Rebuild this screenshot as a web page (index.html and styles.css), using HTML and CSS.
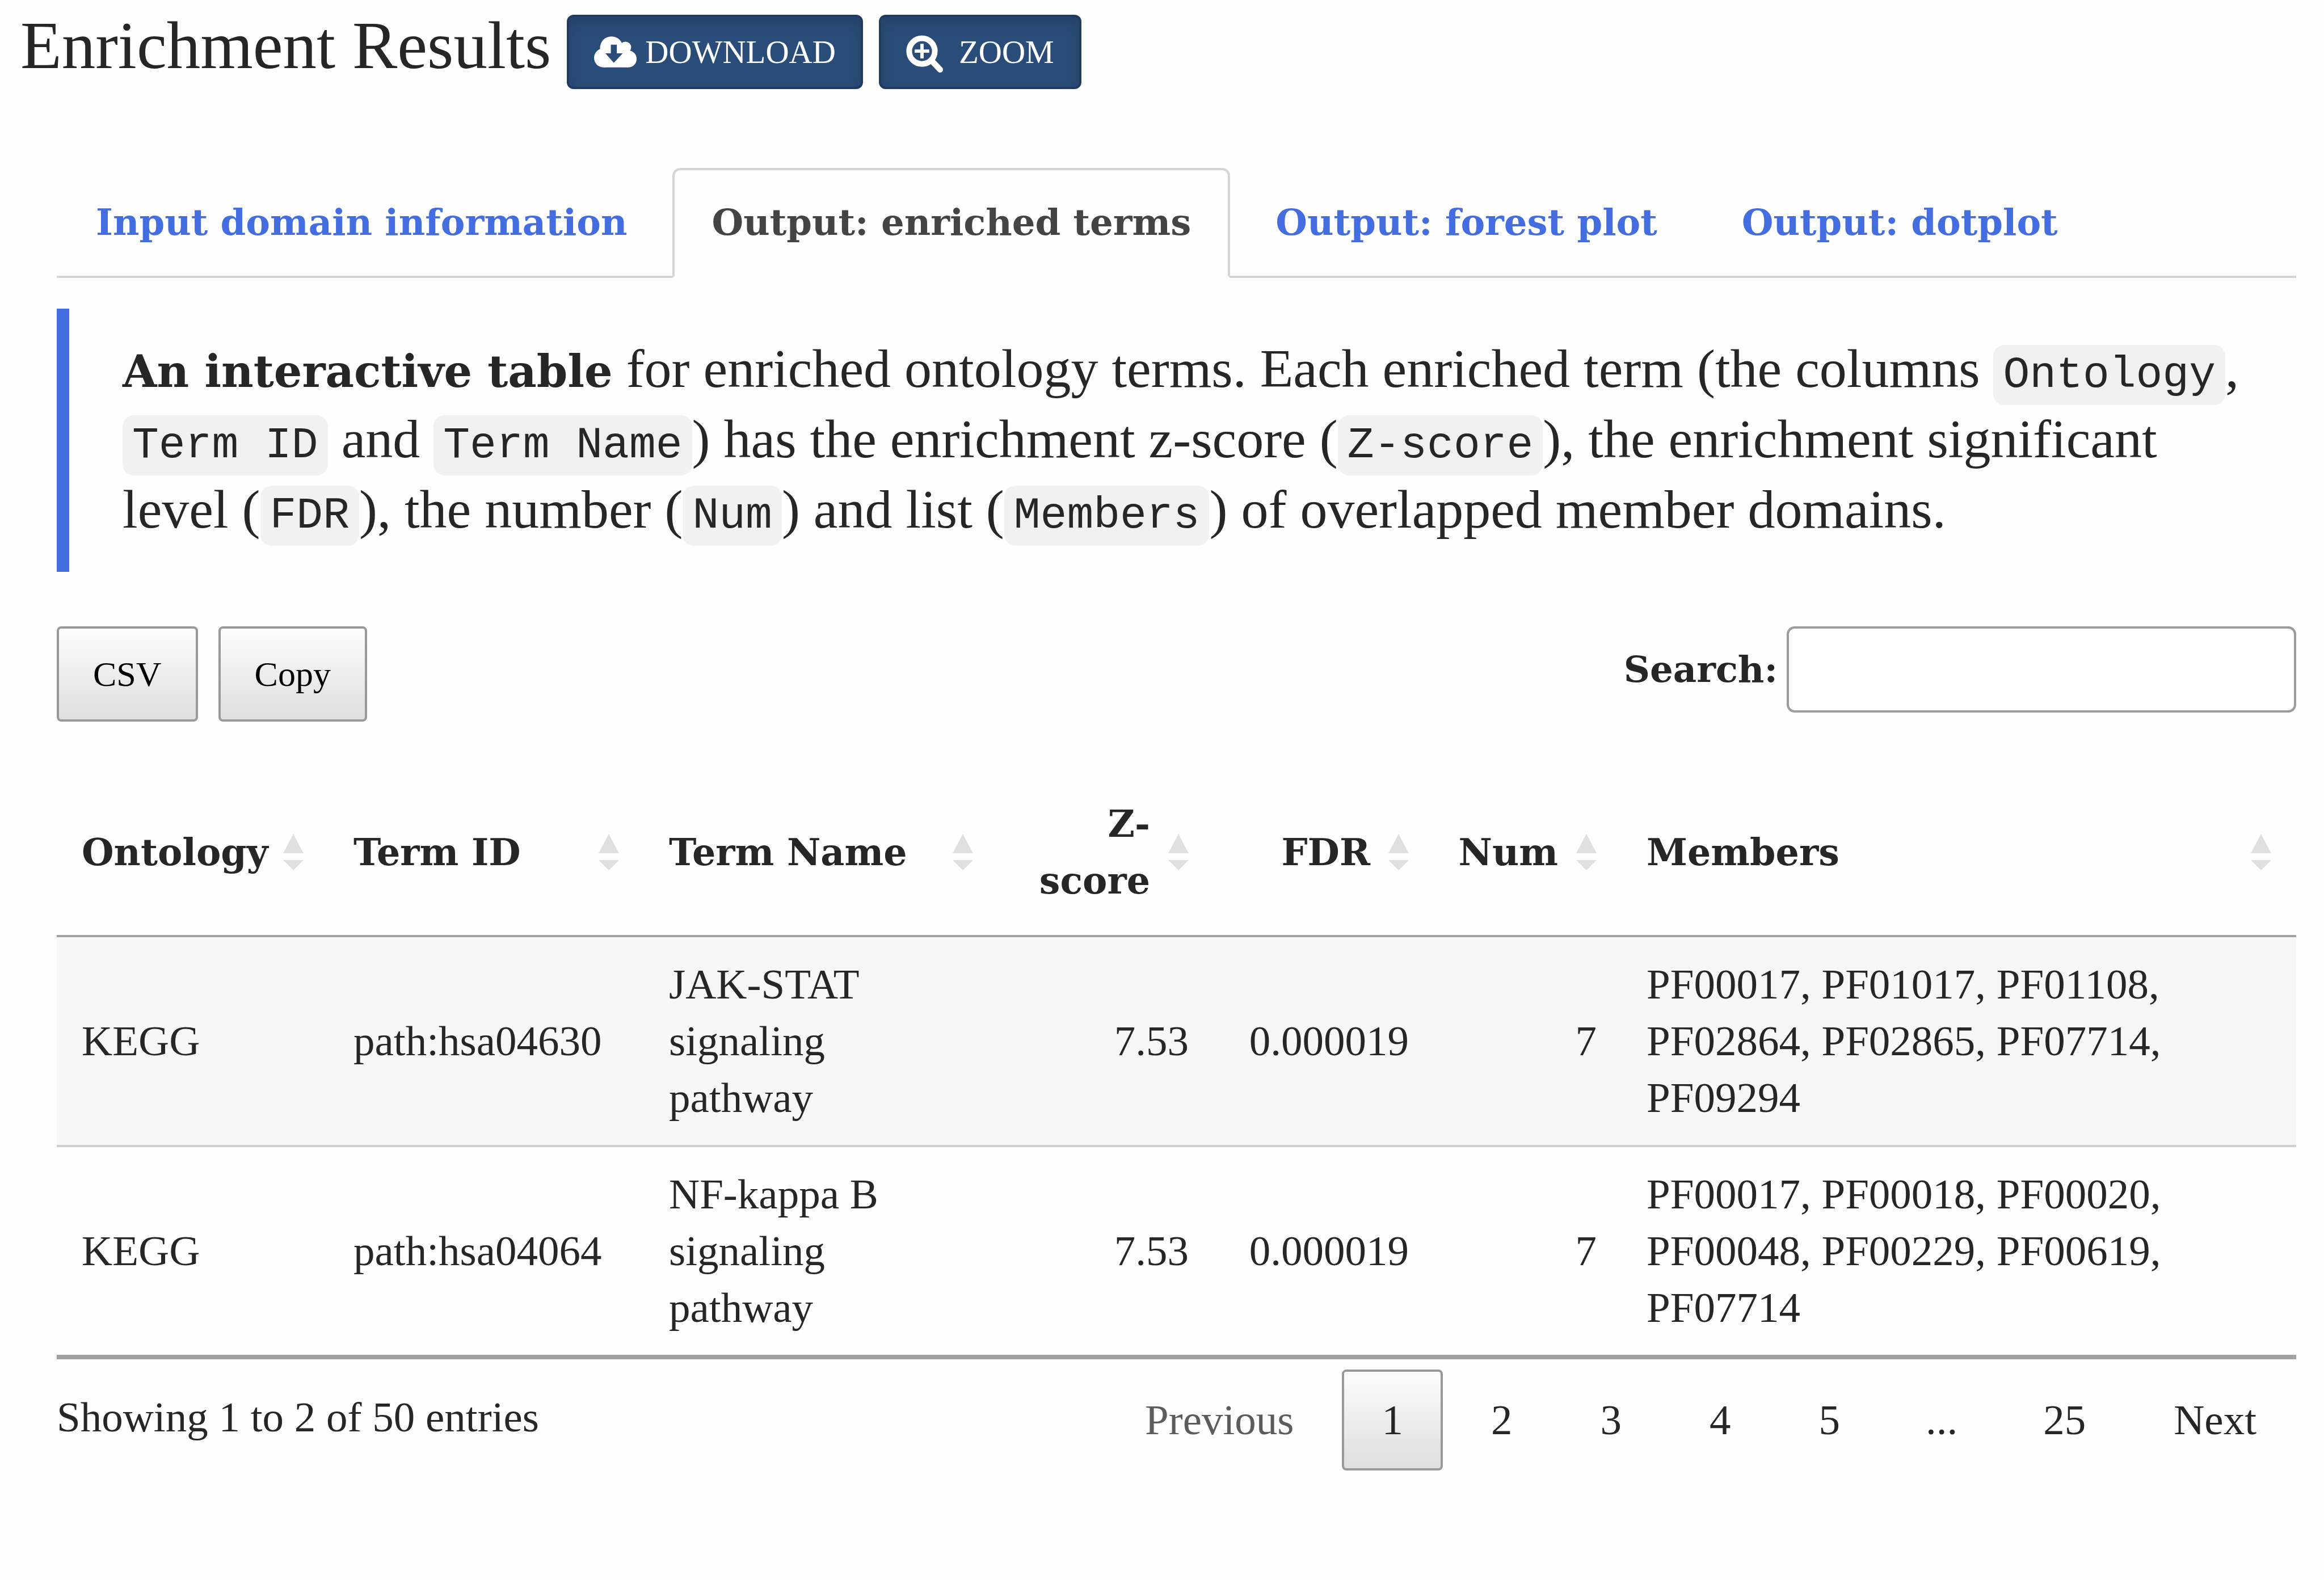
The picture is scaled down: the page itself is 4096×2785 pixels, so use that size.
FILE: index.html
```html
<!DOCTYPE html>
<html lang="en">
<head>
<meta charset="utf-8">
<title>Enrichment Results</title>
<link rel="stylesheet" href="styles.css">
</head>
<body>
<header class="page-head">
  <h1 class="title">Enrichment Results</h1>
  <button class="action" type="button">
    <svg class="icon-cloud" viewBox="0 0 327 238" aria-hidden="true"><g fill="#fff"><circle cx="134" cy="88" r="88"/><circle cx="241" cy="84" r="44"/><circle cx="73" cy="165" r="73"/><circle cx="262" cy="173" r="65"/><path d="M73 120H262V238H73ZM160 70H240V130H160Z"/></g><path fill="#2a4c78" d="M129 63H175V130H220L152 203L87 130H129Z"/></svg>
    DOWNLOAD
  </button>
  <button class="action action-zoom" type="button">
    <svg class="icon-zoom" viewBox="0 -32 288 320" aria-hidden="true"><g fill="none" stroke="#fff"><circle cx="122" cy="122" r="99" stroke-width="44"/><path d="M200 200L262 265" stroke-width="46" stroke-linecap="round"/><path d="M122 66V178M66 122H178" stroke-width="26"/></g></svg>
    ZOOM
  </button>
</header>

<main class="content">
  <nav class="tabs">
    <a class="tab" href="#input">Input domain information</a>
    <a class="tab tab-active" href="#terms" aria-current="page">Output: enriched terms</a>
    <a class="tab" href="#forest">Output: forest plot</a>
    <a class="tab" href="#dotplot">Output: dotplot</a>
  </nav>

  <blockquote class="intro">
    <p><strong>An interactive table</strong> for enriched ontology terms. Each enriched term (the columns <code>Ontology</code>, <br><code>Term ID</code> and <code>Term Name</code>) has the enrichment z-score (<code>Z-score</code>), the enrichment significant <br>level (<code>FDR</code>), the number (<code>Num</code>) and list (<code>Members</code>) of overlapped member domains.</p>
  </blockquote>

  <div class="toolbar">
    <div class="exports">
      <button class="export" type="button">CSV</button>
      <button class="export" type="button">Copy</button>
    </div>
    <div class="search">
      <label for="search">Search:</label>
      <input id="search" type="search">
    </div>
  </div>

  <table class="terms">
    <colgroup>
      <col class="c-ontology"><col class="c-id"><col class="c-name"><col class="c-score"><col class="c-fdr"><col class="c-num"><col class="c-members">
    </colgroup>
    <thead>
      <tr>
        <th scope="col"><div class="head"><span>Ontology</span><i class="sort"></i></div></th>
        <th scope="col"><div class="head"><span>Term ID</span><i class="sort"></i></div></th>
        <th scope="col"><div class="head"><span>Term Name</span><i class="sort"></i></div></th>
        <th scope="col"><div class="head head-num"><span>Z-<br>score</span><i class="sort"></i></div></th>
        <th scope="col"><div class="head head-num"><span>FDR</span><i class="sort"></i></div></th>
        <th scope="col"><div class="head head-num"><span>Num</span><i class="sort"></i></div></th>
        <th scope="col"><div class="head"><span>Members</span><i class="sort"></i></div></th>
      </tr>
    </thead>
    <tbody>
      <tr>
        <td>KEGG</td><td>path:hsa04630</td><td>JAK-STAT<br>signaling<br>pathway</td>
        <td class="num">7.53</td><td class="num">0.000019</td><td class="num">7</td>
        <td>PF00017, PF01017, PF01108,<br>PF02864, PF02865, PF07714,<br>PF09294</td>
      </tr>
      <tr>
        <td>KEGG</td><td>path:hsa04064</td><td>NF-kappa B<br>signaling<br>pathway</td>
        <td class="num">7.53</td><td class="num">0.000019</td><td class="num">7</td>
        <td>PF00017, PF00018, PF00020,<br>PF00048, PF00229, PF00619,<br>PF07714</td>
      </tr>
    </tbody>
  </table>

  <footer class="table-foot">
    <p class="info">Showing 1 to 2 of 50 entries</p>
    <div class="pager">
      <button class="page" type="button" disabled>Previous</button>
      <button class="page page-current" type="button" aria-current="page">1</button>
      <button class="page" type="button">2</button>
      <button class="page" type="button">3</button>
      <button class="page" type="button">4</button>
      <button class="page" type="button">5</button>
      <span class="gap">...</span>
      <button class="page" type="button">25</button>
      <button class="page" type="button">Next</button>
    </div>
  </footer>
</main>
</body>
</html>
```
FILE: styles.css
```css
* { box-sizing: border-box; }

body {
  margin: 0;
  background: #fefefe;
  color: #262626;
  font-family: Georgia, "Liberation Serif", serif;
  font-size: 75px;
  line-height: 100px;
}

button, input { font: inherit; color: inherit; }

.tab, .intro strong, .search label, .terms th {
  font-family: Georgia, "DejaVu Serif", serif;
  font-weight: 700;
}

.page-head {
  display: flex;
  align-items: flex-start;
  padding: 26px 36px 0;
  gap: 28px;
}
.title {
  margin: 0;
  font-size: 119px;
  line-height: 108px;
  font-weight: 400;
}
.action {
  display: flex;
  align-items: center;
  height: 131px;
  padding: 0 44px;
  gap: 15px;
  border: 4px solid #213b5f;
  border-radius: 12px;
  background: #2a4c78;
  box-shadow: inset 0 12px 20px #25436a;
  color: #fff;
  font-size: 57px;
}
.action-zoom { gap: 27px; }
.icon-cloud { width: 75px; height: 55px; }
.icon-zoom { width: 66px; height: 73px; }

.content { padding: 139px 49px 0 100px; }

.tabs {
  display: flex;
  gap: 11px;
  border-bottom: 4px solid #d5d5d5;
}
.tab {
  margin-bottom: -4px;
  padding: 42px 65px 44px;
  border: 4px solid transparent;
  border-radius: 14px 14px 0 0;
  color: #446ee0;
  font-size: 64px;
  text-decoration: none;
}
.tab-active {
  border-color: #d5d5d5;
  border-bottom-color: #fefefe;
  background: #fefefe;
  color: #444;
}

.intro {
  margin: 54px 0 0;
  padding: 44px 0 48px 94px;
  border-left: 22px solid #446ee0;
  font-size: 96px;
  line-height: 124px;
}
.intro p { margin: 0; white-space: nowrap; }
.intro strong { font-size: 78px; line-height: 1; }
.intro code {
  padding: 9px 17px;
  border-radius: 20px;
  background: #f1f1f1;
  font-family: "Liberation Mono", monospace;
  font-size: 78px;
  line-height: 1;
}

.toolbar {
  display: flex;
  justify-content: space-between;
  align-items: flex-start;
  margin-top: 96px;
}
.exports { display: flex; gap: 36px; }
.export {
  height: 168px;
  padding: 0 60px;
  border: 4px solid #999;
  border-radius: 8px;
  background: linear-gradient(#fdfdfd, #dedede);
  color: #000;
  font-size: 62px;
}
.search {
  display: flex;
  align-items: center;
  gap: 16px;
}
.search label { font-size: 64px; }
.search input {
  width: 898px;
  height: 152px;
  padding: 0 24px;
  border: 4px solid #9c9c9c;
  border-radius: 14px;
  background: #fff;
}

.terms {
  width: 100%;
  margin-top: 84px;
  border-collapse: collapse;
  border-bottom: 8px solid #a2a2a2;
  table-layout: fixed;
}
.c-ontology { width: 479px; }
.c-id { width: 556px; }
.c-name { width: 624px; }
.c-score { width: 380px; }
.c-fdr { width: 388px; }
.c-num { width: 331px; }
.terms th {
  padding: 46px 44px;
  border-bottom: 4px solid #a2a2a2;
  font-size: 65px;
  text-align: left;
}
.head {
  display: flex;
  align-items: center;
  justify-content: space-between;
}
.head-num {
  justify-content: flex-end;
  gap: 32px;
  text-align: right;
}
.sort { display: grid; gap: 12px; }
.sort::before, .sort::after {
  content: "";
  width: 36px;
  background: #e0e0e0;
}
.sort::before { height: 34px; clip-path: polygon(50% 0, 100% 100%, 0 100%); }
.sort::after { height: 18px; clip-path: polygon(0 0, 100% 0, 50% 100%); }
.terms td {
  padding: 33px 44px;
  border-bottom: 4px solid #d0d0d0;
}
.terms tbody tr:first-child { background: #f7f7f7; }
.terms tbody tr:last-child td { border-bottom: 0; }
.num { text-align: right; }

.table-foot {
  display: flex;
  justify-content: space-between;
  align-items: flex-start;
  margin-top: 18px;
}
.info { margin: 34px 0 0; }
.pager { display: flex; gap: 15px; }
.page, .gap {
  height: 178px;
  padding: 0 66px;
  border: 4px solid transparent;
  border-radius: 8px;
  background: none;
}
.page:disabled { color: #5c5c5c; }
.page-current { border-color: #999; background: linear-gradient(#fdfdfd, #dedede); }
.gap { padding: 0 62px; line-height: 170px; }
```
